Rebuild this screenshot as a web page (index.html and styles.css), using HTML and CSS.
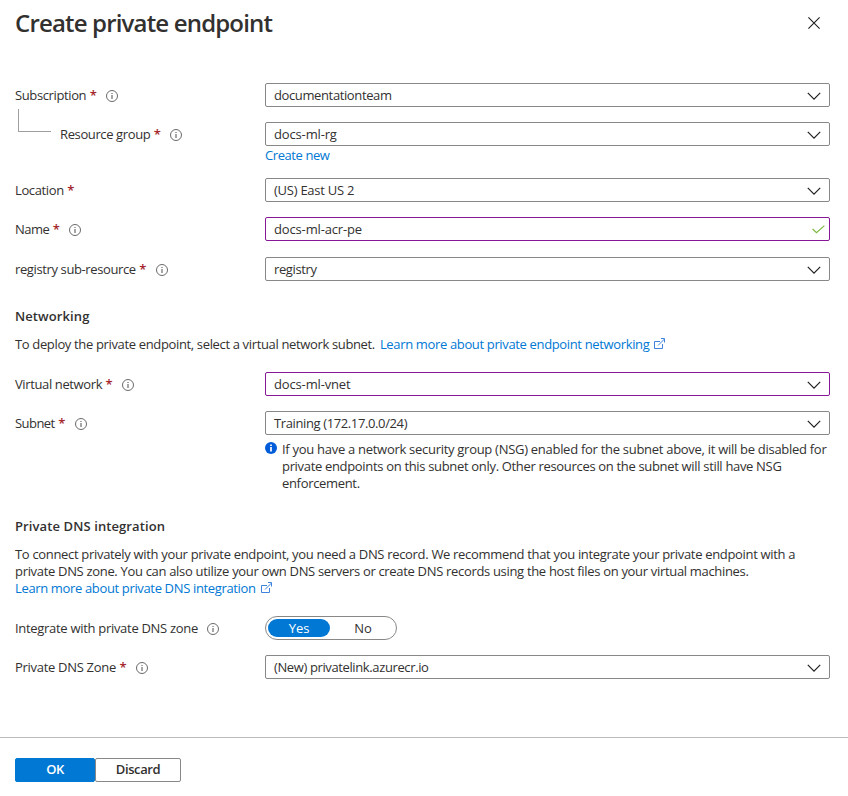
FILE: index.html
```html
<!DOCTYPE html>
<html lang="en">
<head>
<meta charset="utf-8">
<title>Create private endpoint</title>
<link rel="stylesheet" href="styles.css">
</head>
<body>
<svg class="defs" aria-hidden="true">
  <symbol id="info" viewBox="0 0 12 12"><circle cx="6" cy="6" r="5.5" fill="none" stroke="#6b6a69"/><path d="M6 5v4M6 3v1" stroke="#605e5c" stroke-width="1.1"/></symbol>
  <symbol id="chevron" viewBox="0 0 14 8"><path d="M.8.9 7 7.1 13.2.9" fill="none" stroke="#201f1e" stroke-width="1.2"/></symbol>
  <symbol id="check" viewBox="0 0 13 9"><path d="M.6 4 4.5 7.8 12.4.6" fill="none" stroke="#7fba42" stroke-width="1.2"/></symbol>
  <symbol id="external" viewBox="0 0 12 12"><path d="M6 3.5H.5v7h8V6M4 7.5l6.5-6.5M7 .5h3.500v4" fill="none" stroke="#3f83dc"/></symbol>
</svg>
<header class="header">
  <h1 class="title">Create private endpoint</h1>
  <svg class="close" viewBox="0 0 12 12"><path d="M.4.4l11.2 11.2M11.6.4.4 11.6" stroke="#201f1e" stroke-width="1.1"/></svg>
</header>
<main class="form">
  <div class="row">
    <label class="label"><span>Subscription</span><b class="req">*</b><svg class="info"><use href="#info"/></svg></label>
    <div class="field"><span>documentationteam</span><svg class="chevron"><use href="#chevron"/></svg></div>
  </div>
  <div class="row group">
    <label class="label"><i class="branch"></i><span>Resource group</span><b class="req">*</b><svg class="info"><use href="#info"/></svg></label>
    <div class="field wide"><span>docs-ml-rg</span><svg class="chevron"><use href="#chevron"/></svg></div>
  </div>
  <a class="link create"><span>Create new</span></a>
  <div class="row location">
    <label class="label"><span>Location</span><b class="req">*</b></label>
    <div class="field region"><span>(US) East US 2</span><svg class="chevron"><use href="#chevron"/></svg></div>
  </div>
  <div class="row">
    <label class="label short"><span>Name</span><b class="req">*</b><svg class="info"><use href="#info"/></svg></label>
    <div class="field edited wide"><span>docs-ml-acr-pe</span><svg class="check"><use href="#check"/></svg></div>
  </div>
  <div class="row registry">
    <label class="label"><span>registry sub-resource</span><b class="req">*</b><svg class="info"><use href="#info"/></svg></label>
    <div class="field"><span>registry</span><svg class="chevron"><use href="#chevron"/></svg></div>
  </div>
  <h2 class="heading">Networking</h2>
  <p class="text"><span>To deploy the private endpoint, select a virtual network subnet.</span> <a class="link learn"><span>Learn more about private endpoint networking</span><svg class="external"><use href="#external"/></svg></a></p>
  <div class="row network">
    <label class="label"><span>Virtual network</span><b class="req">*</b><svg class="info"><use href="#info"/></svg></label>
    <div class="field edited wide"><span>docs-ml-vnet</span><svg class="chevron"><use href="#chevron"/></svg></div>
  </div>
  <div class="row">
    <label class="label short"><span>Subnet</span><b class="req">*</b><svg class="info"><use href="#info"/></svg></label>
    <div class="field"><span>Training (172.17.0.0/24)</span><svg class="chevron"><use href="#chevron"/></svg></div>
  </div>
  <div class="note">
    <svg class="badge" viewBox="0 0 12 12"><circle cx="6" cy="6" r="6" fill="#015cda"/><path d="M6 5v4.4M6 2.4v1.7" stroke="#fff" stroke-width="1.7"/></svg>
    <p class="text">If you have a network security group (NSG) enabled for the subnet above, it will be disabled for<br><span class="tight">private endpoints on this subnet only. Other resources on the subnet will still have NSG<br>enforcement.</span></p>
  </div>
  <h2 class="heading">Private DNS integration</h2>
  <p class="text about">To connect privately with your private endpoint, you need a DNS record. We recommend that you integrate your private endpoint with a<br>private DNS zone. You can also utilize your own DNS servers or create DNS records using the host files on your virtual machines.<br><a class="link"><span>Learn more about private DNS integration</span><svg class="external"><use href="#external"/></svg></a></p>
  <div class="row integrate">
    <label class="label dns"><span>Integrate with private DNS zone</span><svg class="info"><use href="#info"/></svg></label>
    <div class="toggle"><span class="option on">Yes</span><span class="option">No</span></div>
  </div>
  <div class="row">
    <label class="label dns"><span>Private DNS Zone</span><b class="req">*</b><svg class="info"><use href="#info"/></svg></label>
    <div class="field"><span>(New) privatelink.azurecr.io</span><svg class="chevron"><use href="#chevron"/></svg></div>
  </div>
</main>
<footer class="footer"><button class="button primary">OK</button><button class="button">Discard</button></footer>
</body>
</html>
```
FILE: styles.css
```css
* { box-sizing: border-box; }
body {
  margin: 0;
  height: 796px;
  display: flex;
  flex-direction: column;
  overflow: hidden;
  background: #fff;
  color: #323130;
  font: 13px/17px "Open Sans", "Noto Sans", sans-serif;
  letter-spacing: -0.35px;
}
.defs { display: none; }
svg { display: block; flex: none; }
h1, h2, p { margin: 0; }
.header {
  display: flex;
  justify-content: space-between;
  align-items: center;
  height: 46px;
  padding: 0 28px 0 15px;
}
.title { font-size: 24px; line-height: 30px; font-weight: 600; letter-spacing: -0.83px; margin-top: -1px; }
.close { width: 12px; height: 12px; }
.form { flex: 1; padding: 37px 18px 0 15px; }
.row { display: flex; height: 24px; margin-bottom: 15px; }
.group { margin-bottom: 0; }
.location { margin-top: 14px; }
.registry { margin-top: 16px; margin-bottom: 26px; }
.network { margin-top: 19px; }
.integrate { margin-top: 19px; }
.label { display: flex; align-items: center; width: 250px; white-space: nowrap; letter-spacing: -0.38px; }
.label.dns { letter-spacing: -0.3px; }
.label.short { letter-spacing: -0.55px; }
.req { margin-left: 3.5px; color: #a4262c; font-weight: 600; letter-spacing: 0; }
.info { width: 12px; height: 12px; margin: 1px 0 0 9.5px; }
.branch {
  width: 33px;
  height: 23px;
  margin: -27px 9px 0 3px;
  border: solid #a19f9d;
  border-width: 0 0 1px 1px;
}
.field {
  display: flex;
  flex: 1;
  align-items: center;
  justify-content: space-between;
  padding: 0 8px;
  border: 1px solid #8a8886;
  border-radius: 2px;
  letter-spacing: -0.38px;
}
.wide { letter-spacing: -0.15px; }
.region { letter-spacing: -0.25px; }
.edited { border-color: #881798; }
.chevron { width: 14px; height: 8px; margin-top: 1px; }
.check { width: 13px; height: 9px; margin-right: -4px; }
.link { color: #0078d4; }
.create { display: block; height: 17px; margin: 1px 0 0 250px; letter-spacing: -0.42px; }
.heading { font-size: 13px; line-height: 18px; font-weight: 600; letter-spacing: 0.1px; margin-bottom: 11px; }
.text { white-space: nowrap; }
.about { letter-spacing: -0.32px; }
.about .link { letter-spacing: -0.35px; }
.learn { margin-left: 2px; }
.external { display: inline-block; width: 12px; height: 12px; margin-left: 5px; vertical-align: -1px; }
.note { display: flex; margin: -9px 0 25px 250px; letter-spacing: -0.285px; }
.tight { letter-spacing: -0.325px; }
.badge { width: 12px; height: 12px; margin: 1px 5px 0 0; }
.toggle {
  display: flex;
  width: 132px;
  height: 24px;
  padding: 2px;
  border: 1px solid #8a8886;
  border-radius: 12px;
}
.option { width: 62px; line-height: 18px; text-align: center; border-radius: 9px; letter-spacing: -0.1px; }
.option + .option { margin-left: 2px; }
.option.on { background: #0078d4; color: #fff; }
.footer { display: flex; height: 59px; padding: 20px 15px 0; border-top: 1px solid #bdbbb9; }
.button {
  height: 24px;
  width: 86px;
  padding: 0 0 2px;
  border: 1px solid #8a8886;
  border-radius: 2px;
  background: #fff;
  color: #323130;
  font: 600 13px/20px "Open Sans", "Noto Sans", sans-serif;
  letter-spacing: -0.4px;
}
.primary { width: 80px; border-color: #0078d4; background: #0078d4; color: #fff; }
```
